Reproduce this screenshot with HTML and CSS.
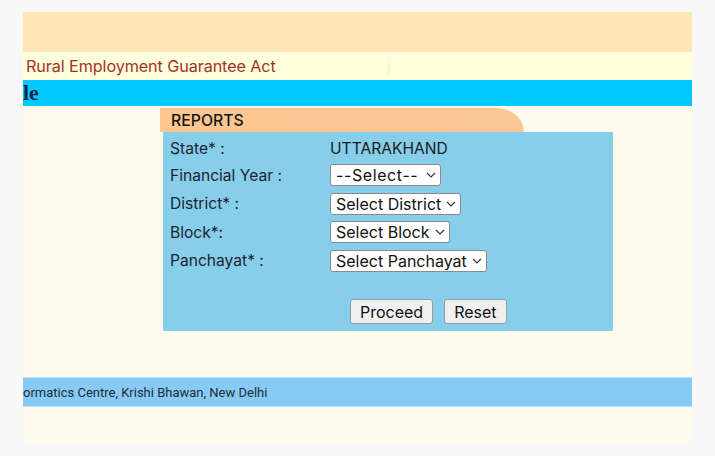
FILE: index.html
```html
<!DOCTYPE html>
<html lang="en">
<head>
<meta charset="utf-8">
<title>Reports</title>
<link rel="stylesheet" href="styles.css">
</head>
<body>
<div class="page">
  <div class="top-band"></div>
  <div class="title-band">
    <span class="title-text">Rural Employment Guarantee Act</span>
    <span class="title-divider"></span>
  </div>
  <div class="blue-band"><span class="blue-text">le</span></div>
  <main class="content">
    <div class="reports">
      <div class="tab">REPORTS</div>
      <div class="panel">
        <div class="form-grid">
          <div class="label">State* :</div>
          <div class="value">UTTARAKHAND</div>
          <div class="label">Financial Year :</div>
          <div class="value"><div class="select sel-fy"><span>--Select--</span><svg class="chev" viewBox="0 0 10 6" width="10" height="6"><path d="M1 1l4 4 4-4" fill="none" stroke="#333" stroke-width="1.1"/></svg></div></div>
          <div class="label">District* :</div>
          <div class="value"><div class="select"><span>Select District</span><svg class="chev" viewBox="0 0 10 6" width="10" height="6"><path d="M1 1l4 4 4-4" fill="none" stroke="#333" stroke-width="1.1"/></svg></div></div>
          <div class="label">Block*:</div>
          <div class="value"><div class="select"><span>Select Block</span><svg class="chev" viewBox="0 0 10 6" width="10" height="6"><path d="M1 1l4 4 4-4" fill="none" stroke="#333" stroke-width="1.1"/></svg></div></div>
          <div class="label">Panchayat* :</div>
          <div class="value"><div class="select"><span>Select Panchayat</span><svg class="chev" viewBox="0 0 10 6" width="10" height="6"><path d="M1 1l4 4 4-4" fill="none" stroke="#333" stroke-width="1.1"/></svg></div></div>
        </div>
        <div class="buttons">
          <button class="btn" type="button">Proceed</button>
          <button class="btn" type="button">Reset</button>
        </div>
      </div>
    </div>
  </main>
  <footer class="footer">ormatics Centre, Krishi Bhawan, New Delhi</footer>
  <div class="bottom"></div>
</div>
</body>
</html>
```

FILE: styles.css
```css
html, body {
  margin: 0;
  padding: 0;
}
body {
  background: #f8f8f8;
  font-family: Inter, "Liberation Sans", Arial, sans-serif;
  padding: 12px 23px 0 23px;
}
.page {
  width: 669px;
  background: #fffaee;
}
.top-band {
  height: 40px;
  background: #ffe6b6;
}
.title-band {
  height: 28px;
  background: #ffffdc;
  display: flex;
  align-items: center;
  position: relative;
}
.title-text {
  margin-left: 3px;
  color: #a0322a;
  font-size: 16.2px;
  letter-spacing: -0.1px;
}
.title-divider {
  position: absolute;
  left: 365px;
  top: 5px;
  width: 1px;
  height: 18px;
  background: #f1ecd2;
}
.blue-band {
  height: 26px;
  background: #00c9ff;
  display: flex;
  align-items: center;
}
.blue-text {
  font-family: "Liberation Serif", "DejaVu Serif", serif;
  font-weight: bold;
  font-size: 22px;
  color: #15284a;
  margin-top: -1px;
}
.content {
  height: 271px;
  padding-top: 2px;
  box-sizing: border-box;
}
.reports {
  margin-left: 137px;
  width: 453px;
}
.tab {
  width: 364px;
  height: 24px;
  background: linear-gradient(90deg, #fdc792, #fbc796);
  border-top-right-radius: 28px 24px;
  box-sizing: border-box;
  padding-left: 11px;
  display: flex;
  align-items: center;
  font-size: 15.8px;
  font-weight: 500;
  color: #151515;
}
.panel {
  margin-left: 3px;
  width: 450px;
  height: 199px;
  background: #87ceeb;
  box-sizing: border-box;
  padding: 3px 0 0 7px;
}
.form-grid {
  display: grid;
  grid-template-columns: 160px auto;
  grid-template-rows: 26px 28px 29px 28px 29px;
  align-items: center;
}
.label, .value {
  font-size: 15.6px;
  color: #1c2430;
}
.value {
  color: #1a1a1a;
}
.select {
  display: inline-flex;
  align-items: center;
  height: 22px;
  box-sizing: border-box;
  background: #fff;
  border: 1px solid #8a8a8a;
  border-radius: 3px;
  padding: 0 4px 0 5px;
  font-size: 16px;
  color: #111;
}
.sel-fy span {
  letter-spacing: 0.6px;
}
.chev {
  margin-left: 5px;
}
.sel-fy .chev {
  margin-left: 8px;
}
.buttons {
  display: flex;
  gap: 11px;
  padding-left: 180px;
  margin-top: 24px;
}
.btn {
  height: 25px;
  box-sizing: border-box;
  background: #f0f0f0;
  border: 1px solid #9a9a9a;
  border-radius: 3px;
  font-family: Inter, "Liberation Sans", Arial, sans-serif;
  font-size: 16px;
  color: #111;
  padding: 0 9px;
}
.footer {
  height: 30px;
  background: #87caf5;
  border-top: 1px solid #b6e2fb;
  border-bottom: 1px solid #b6e2fb;
  box-sizing: border-box;
  display: flex;
  align-items: center;
  font-family: Roboto, "Liberation Sans", Arial, sans-serif;
  font-size: 13px;
  color: #1e2a38;
}
.bottom {
  height: 37px;
}
```
